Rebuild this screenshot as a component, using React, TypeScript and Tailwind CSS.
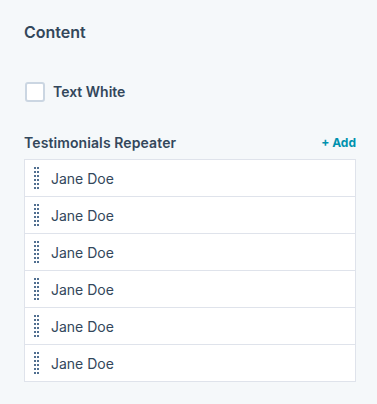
export default function App() {
  const items = ["Jane Doe", "Jane Doe", "Jane Doe", "Jane Doe", "Jane Doe", "Jane Doe"];

  return (
    <div className="w-[377px] h-[404px] bg-[#f5f8fa] pl-6 pr-[21px] pt-[22px] font-['Inter',sans-serif] text-[#33475b]">
      <h2 className="text-[16px] font-semibold leading-5">Content</h2>

      <label className="mt-[40px] flex items-center gap-2 h-5">
        <span className="ml-px w-5 h-5 rounded-[3px] border-2 border-[#cbd6e2] bg-white" />
        <span className="text-[14px] font-semibold leading-5">Text White</span>
      </label>

      <div className="mt-[31px] flex items-center justify-between h-5">
        <span className="text-[14px] font-semibold leading-5 tracking-[0.1px]">Testimonials Repeater</span>
        <button className="text-[12px] font-bold text-[#0091ae]">+ Add</button>
      </div>

      <ul className="mt-[6px] border border-[#dfe3eb] bg-white">
        {items.map((name, i) => (
          <li
            key={i}
            className={`flex items-center pl-[9px] ${i > 0 ? "h-[37px] border-t border-[#dfe3eb]" : "h-[36px]"}`}
          >
            <span className="grid grid-cols-2 gap-x-px gap-y-[2px]">
              {Array.from({ length: 12 }).map((_, d) => (
                <span key={d} className="w-[2px] h-[2px] bg-[#516f90]" />
              ))}
            </span>
            <span className="ml-[12px] text-[14px] text-[#33475b]">{name}</span>
          </li>
        ))}
      </ul>
    </div>
  );
}
